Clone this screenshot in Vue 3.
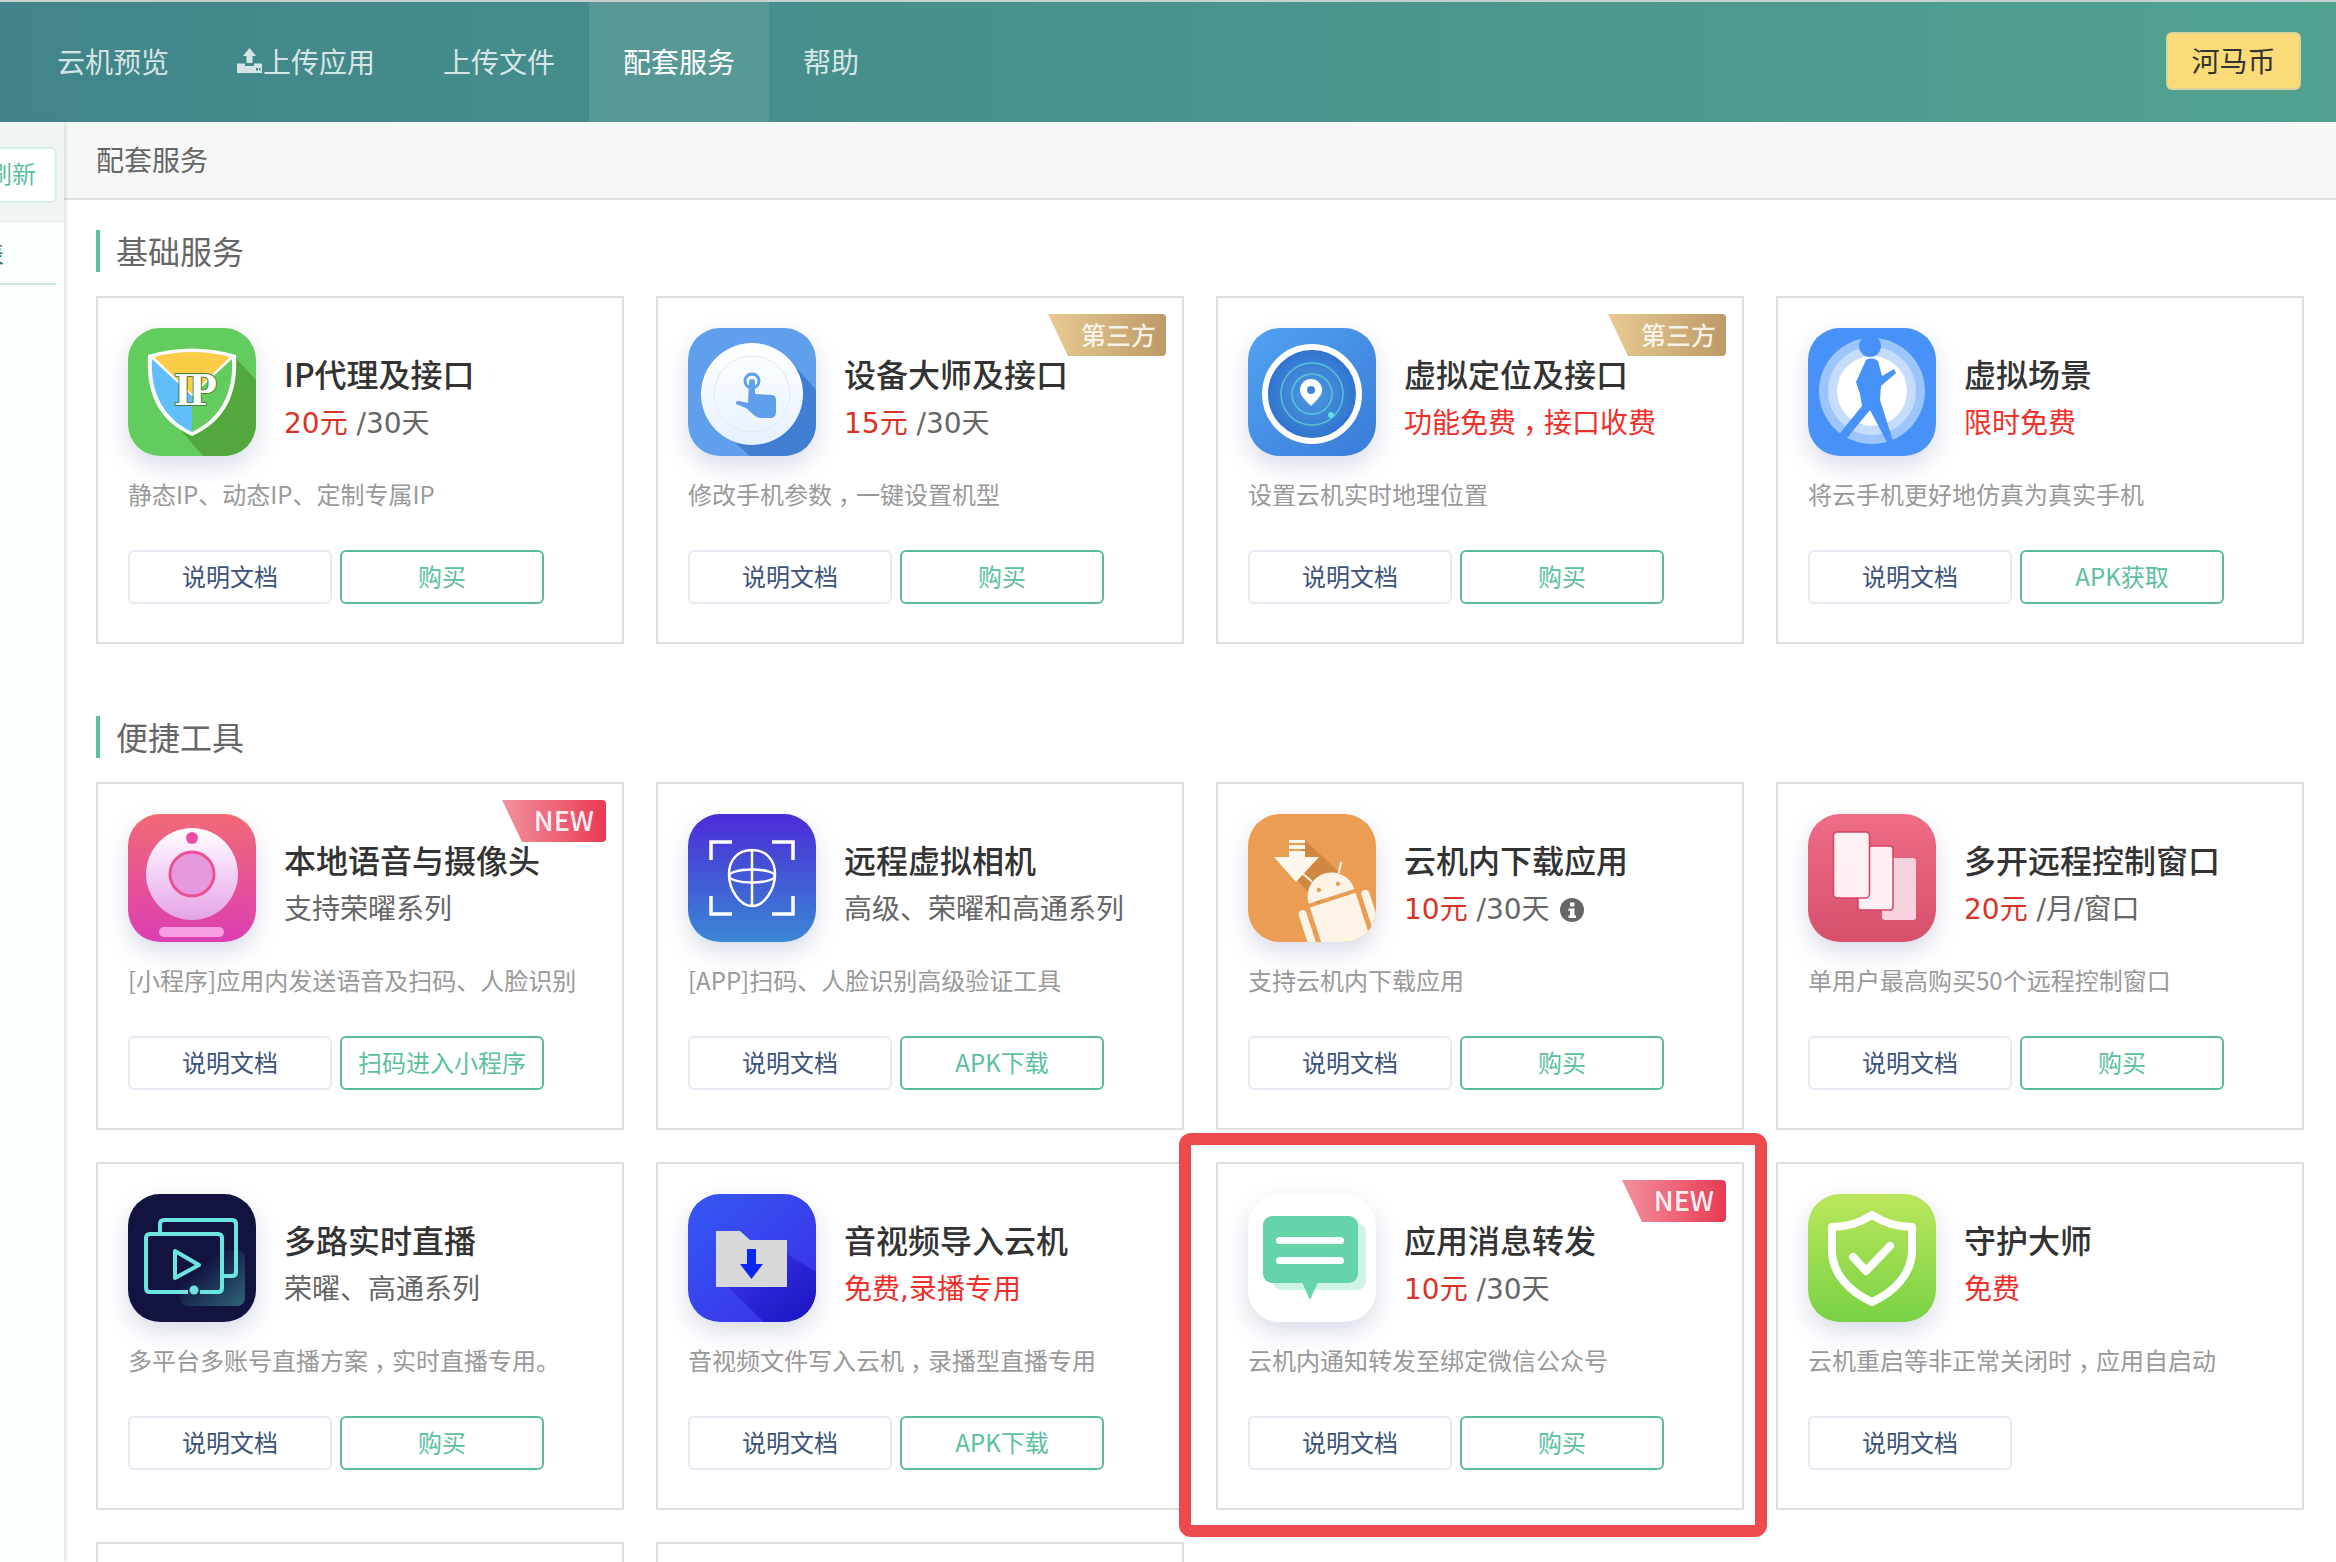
<script setup>
const nav = [
  { label: '云机预览' },
  { label: '上传应用', upload: true },
  { label: '上传文件' },
  { label: '配套服务', active: true },
  { label: '帮助' }
]
const basic = [
  { icon: 'ip', title: 'IP代理及接口', price: '20元', unit: ' /30天', desc: '静态IP、动态IP、定制专属IP', action: '购买' },
  { icon: 'device', title: '设备大师及接口', price: '15元', unit: ' /30天', desc: '修改手机参数，一键设置机型', action: '购买', badge: 'third' },
  { icon: 'loc', title: '虚拟定位及接口', free: '功能免费，接口收费', desc: '设置云机实时地理位置', action: '购买', badge: 'third' },
  { icon: 'scene', title: '虚拟场景', free: '限时免费', desc: '将云手机更好地仿真为真实手机', action: 'APK获取' }
]
const tools = [
  { icon: 'cam', title: '本地语音与摄像头', sub: '支持荣曜系列', desc: '[小程序]应用内发送语音及扫码、人脸识别', action: '扫码进入小程序', badge: 'new' },
  { icon: 'face', title: '远程虚拟相机', sub: '高级、荣曜和高通系列', desc: '[APP]扫码、人脸识别高级验证工具', action: 'APK下载' },
  { icon: 'dl', title: '云机内下载应用', price: '10元', unit: ' /30天', info: true, desc: '支持云机内下载应用', action: '购买' },
  { icon: 'multi', title: '多开远程控制窗口', price: '20元', unit: ' /月/窗口', desc: '单用户最高购买50个远程控制窗口', action: '购买' },
  { icon: 'live', title: '多路实时直播', sub: '荣曜、高通系列', desc: '多平台多账号直播方案，实时直播专用。', action: '购买' },
  { icon: 'folder', title: '音视频导入云机', free: '免费,录播专用', desc: '音视频文件写入云机，录播型直播专用', action: 'APK下载' },
  { icon: 'msg', title: '应用消息转发', price: '10元', unit: ' /30天', desc: '云机内通知转发至绑定微信公众号', action: '购买', badge: 'new', marked: true },
  { icon: 'shield', title: '守护大师', free: '免费', desc: '云机重启等非正常关闭时，应用自启动' },
  { empty: true },
  { empty: true }
]
const sections = [
  { name: '基础服务', cards: basic },
  { name: '便捷工具', cards: tools }
]
// Splits a text around the full-width comma so that it can sit in the middle of its cell.
const split = (s) => s.split(/(，)/).filter(Boolean)
</script>

<template>
  <div class="page">
    <div class="topline"></div>
    <header class="header">
      <nav class="nav">
        <a v-for="n in nav" :key="n.label" class="nav-item" :class="{ active: n.active }">
          <svg v-if="n.upload" class="up-icon" viewBox="0 0 25 25">
            <path d="M12.5 0 L19 8 H15.5 V15 H9.500 V8 H6 Z" fill="#d3e6e5" />
            <path d="M0 15.500 H8 V18 H17 V15.500 H25 V25 H0 Z" fill="#d3e6e5" />
            <rect x="19" y="20" width="2" height="2.500" fill="#41868a" />
            <rect x="22" y="20" width="1.500" height="2.500" fill="#41868a" />
          </svg>
          <span>{{ n.label }}</span>
        </a>
      </nav>
      <button class="coin">河马币</button>
    </header>
    <div class="body">
      <aside class="side">
        <div class="side-top">
          <div class="refresh">刷新</div>
        </div>
        <div class="side-row"><span>列表</span></div>
      </aside>
      <main class="main">
        <div class="crumb">配套服务</div>
        <div class="content">
          <section v-for="s in sections" :key="s.name" class="section">
            <h2 class="sec-title">{{ s.name }}</h2>
            <div class="grid">
              <template v-for="(c, i) in s.cards" :key="i">
                <div v-if="c.empty" class="card"></div>
                <article v-else class="card">
                  <div v-if="c.badge === 'third'" class="badge third">第三方</div>
                  <div v-if="c.badge === 'new'" class="badge new">NEW</div>
                  <div v-if="c.marked" class="mark"></div>
                  <div class="top">
                    <div class="icon">
                      <svg v-if="c.icon === 'ip'" viewBox="0 0 128 128">
                        <rect width="128" height="128" fill="#62cc5f" />
                        <path d="M104 26 L128 52 V128 H75 L44 92Z" fill="#52a83c" />
                        <path d="M20 27 Q64 14 108 27 C110 62 100 92 64 108 C28 92 18 62 20 27Z" fill="#fff" />
                        <path d="M24 31 L64 68 V104 C34 90 22 62 24 31Z" fill="#62bdfb" />
                        <path d="M104 31 L64 68 V104 C94 90 106 62 104 31Z" fill="#62cc5f" />
                        <path d="M26 29 Q64 19 102 29 L64 66Z" fill="#fbcd47" />
                        <text x="66" y="77" text-anchor="middle" class="ip-text">IP</text>
                      </svg>
                      <svg v-else-if="c.icon === 'device'" viewBox="0 0 128 128">
                        <defs><linearGradient id="g-dev" x1="0" y1="0" x2="0" y2="1"><stop offset="0" stop-color="#fff" /><stop offset="1" stop-color="#e6f1fe" /></linearGradient></defs>
                        <rect width="128" height="128" fill="#5f9fec" />
                        <path d="M100 30 L128 62 V128 H62 L36 104Z" fill="#3f7ed0" />
                        <circle cx="64" cy="66" r="51" fill="url(#g-dev)" />
                        <circle cx="64" cy="66" r="38" fill="none" stroke="#dce9f9" stroke-width="1" />
                        <circle cx="64" cy="53" r="7" fill="none" stroke="#5f9fec" stroke-width="3" />
                        <path d="M61 54 Q61 51 64 51 Q67 51 67 54 V66 L84 67 Q88 67.500 88 72 V84 Q88 90 82 90 H72 Q69 90 66 87 L58 80 L48 76 Q47 73 51 73 L60 75Z" fill="#5f9fec" />
                      </svg>
                      <svg v-else-if="c.icon === 'loc'" viewBox="0 0 128 128">
                        <defs>
                          <linearGradient id="g-loc" x1="0" y1="0" x2="1" y2="1"><stop offset="0" stop-color="#52a2f2" /><stop offset="1" stop-color="#397cd8" /></linearGradient>
                          <radialGradient id="g-loc2"><stop offset="0" stop-color="#4f9ae0" /><stop offset="1" stop-color="#2f72cf" /></radialGradient>
                        </defs>
                        <rect width="128" height="128" fill="url(#g-loc)" />
                        <circle cx="64" cy="66" r="47" fill="url(#g-loc2)" stroke="#fff" stroke-width="6" />
                        <circle cx="64" cy="66" r="31" fill="none" stroke="#58c3d2" stroke-width="1.500" />
                        <circle cx="64" cy="66" r="20" fill="none" stroke="#58c3d2" stroke-width="1.500" />
                        <path d="M63 78 C56 71 52 67 52 62 A11 11 0 0 1 74 62 C74 67 70 71 63 78Z" fill="#fff" />
                        <circle cx="63" cy="62" r="4" fill="#3f85d6" />
                        <circle cx="83" cy="87" r="3" fill="#62dce0" />
                      </svg>
                      <svg v-else-if="c.icon === 'scene'" viewBox="0 0 128 128">
                        <rect width="128" height="128" fill="#4891f8" />
                        <circle cx="64" cy="63" r="53" fill="#9cc6fb" />
                        <circle cx="64" cy="63" r="44" fill="#c5dcfd" />
                        <circle cx="64" cy="63" r="35" fill="#fff" />
                        <circle cx="62" cy="18" r="11" fill="#4891f8" />
                        <path d="M58 32 Q64 28 70 33 L74 48 L86 41 L88 45 L73 58 L72 72 L86 116 L81 118 L62 82 L34 116 L28 110 L54 78 L52 66 L48 54Z" fill="#4891f8" />
                      </svg>
                      <svg v-else-if="c.icon === 'cam'" viewBox="0 0 128 128">
                        <defs>
                          <linearGradient id="g-cam" x1="0" y1="0" x2="0" y2="1"><stop offset="0" stop-color="#f06a74" /><stop offset="1" stop-color="#db3eb3" /></linearGradient>
                          <linearGradient id="g-cam2" x1="0" y1="0" x2="0" y2="1"><stop offset="0" stop-color="#fff" /><stop offset="1" stop-color="#e6a3e8" /></linearGradient>
                        </defs>
                        <rect width="128" height="128" fill="url(#g-cam)" />
                        <circle cx="64" cy="60" r="46" fill="url(#g-cam2)" />
                        <circle cx="64" cy="24" r="6" fill="#ea4ea0" />
                        <circle cx="64" cy="60" r="22" fill="#e49adc" stroke="#ec4f95" stroke-width="3" />
                        <rect x="31" y="113" width="65" height="10" rx="5" fill="#f59fe0" />
                      </svg>
                      <svg v-else-if="c.icon === 'face'" viewBox="0 0 128 128">
                        <defs><linearGradient id="g-face" x1="0" y1="0" x2="0" y2="1"><stop offset="0" stop-color="#4b2bd8" /><stop offset="1" stop-color="#3a87d4" /></linearGradient></defs>
                        <rect width="128" height="128" fill="url(#g-face)" />
                        <g fill="none" stroke="#fff" stroke-width="3.500">
                          <path d="M23 46 V28 H44" /><path d="M84 28 H105 V46" /><path d="M23 82 V100 H44" /><path d="M84 100 H105 V82" />
                          <path d="M64 36 C78 36 87 46 87 60 C87 76 76 92 64 92 C52 92 41 76 41 60 C41 46 50 36 64 36Z" stroke-width="2.500" />
                          <ellipse cx="64" cy="62" rx="23" ry="6.500" stroke-width="2.500" />
                          <path d="M64 36 V92" stroke-width="2.500" />
                        </g>
                      </svg>
                      <svg v-else-if="c.icon === 'dl'" viewBox="0 0 128 128">
                        <rect width="128" height="128" fill="#eb9d54" />
                        <path d="M57 26 L95 62 L70 90 L46 62Z" fill="#d0873f" />
                        <path d="M41 26 H57 V29 H41Z M41 31 H57 V35 H41Z M41 37 H57 V43 H71 L48 68 L26 43 H41Z" fill="#fff6ec" />
                        <g transform="rotate(-18 86 90)" fill="#fdf3e6">
                          <path d="M62 82 A24 24 0 0 1 110 82Z" />
                          <rect x="62" y="86" width="48" height="70" />
                          <rect x="49" y="86" width="8" height="44" rx="4" />
                          <rect x="115" y="86" width="8" height="44" rx="4" />
                          <path d="M72 62 L66 52 M100 62 L106 52" stroke="#fdf3e6" stroke-width="2" />
                          <circle cx="76" cy="72" r="2.200" fill="#eb9d54" />
                          <circle cx="96" cy="72" r="2.200" fill="#eb9d54" />
                        </g>
                      </svg>
                      <svg v-else-if="c.icon === 'multi'" viewBox="0 0 128 128">
                        <defs><linearGradient id="g-mul" x1="0" y1="0" x2="0" y2="1"><stop offset="0" stop-color="#ef6d86" /><stop offset="1" stop-color="#d6506c" /></linearGradient></defs>
                        <rect width="128" height="128" fill="url(#g-mul)" />
                        <rect x="74" y="44" width="34" height="62" rx="3" fill="#f8d2dc" />
                        <rect x="50" y="32" width="35" height="64" rx="3" fill="#fdf1f4" stroke="#d84060" stroke-width="1.500" />
                        <rect x="25.500" y="18" width="36" height="66" rx="4" fill="#fdf1f4" stroke="#d84060" stroke-width="1.500" />
                      </svg>
                      <svg v-else-if="c.icon === 'live'" viewBox="0 0 128 128">
                        <defs><linearGradient id="g-live" x1="0.300" y1="0.300" x2="1" y2="1"><stop offset="0" stop-color="#131342" /><stop offset="1" stop-color="#2e6478" /></linearGradient></defs>
                        <rect width="128" height="128" fill="#131342" />
                        <rect x="52" y="56" width="65" height="56" rx="8" fill="url(#g-live)" />
                        <g fill="none" stroke="#6ce5e0" stroke-width="4" stroke-linejoin="round">
                          <path d="M32 38 V30 Q32 26 36 26 H104 Q108 26 108 30 V78 Q108 82 104 82 H95" />
                          <path d="M60 98 H22 Q18 98 18 94 V44 Q18 40 22 40 H90 Q94 40 94 44 V94 Q94 98 90 98 H72" />
                          <path d="M47 57 L71 71 L47 84Z" />
                        </g>
                        <circle cx="66" cy="96" r="4.500" fill="#6ce5e0" />
                      </svg>
                      <svg v-else-if="c.icon === 'folder'" viewBox="0 0 128 128">
                        <defs>
                          <linearGradient id="g-fol" x1="0" y1="0" x2="1" y2="1"><stop offset="0" stop-color="#3458f2" /><stop offset="1" stop-color="#3a2ee8" /></linearGradient>
                          <linearGradient id="g-fol2" x1="0" y1="0" x2="1" y2="1"><stop offset="0" stop-color="#3a36e8" /><stop offset="1" stop-color="#1a14c0" /></linearGradient>
                        </defs>
                        <rect width="128" height="128" fill="url(#g-fol)" />
                        <path d="M40 93 L76 128 H128 V78 L99 60Z" fill="url(#g-fol2)" />
                        <path d="M28 37 H52 L62 46 H99 V93 H28Z" fill="#d8d8d8" />
                        <path d="M59 55 H68 V70 H75 L63.500 85 L52 70 H59Z" fill="#0a28f0" />
                      </svg>
                      <svg v-else-if="c.icon === 'msg'" viewBox="0 0 128 128">
                        <rect width="128" height="128" fill="#fff" />
                        <rect x="25" y="29" width="93" height="67" rx="9" fill="#cff3e4" />
                        <path d="M53 86 H71 L62 106Z" fill="#65d4a8" />
                        <rect x="15" y="22" width="95" height="67" rx="9" fill="#65d4a8" />
                        <rect x="28" y="43" width="68" height="7" rx="3.500" fill="#fff" />
                        <rect x="28" y="63" width="68" height="7" rx="3.500" fill="#fff" />
                      </svg>
                      <svg v-else-if="c.icon === 'shield'" viewBox="0 0 128 128">
                        <defs><linearGradient id="g-shi" x1="0" y1="0" x2="0" y2="1"><stop offset="0" stop-color="#bbe65c" /><stop offset="1" stop-color="#78d144" /></linearGradient></defs>
                        <rect width="128" height="128" fill="url(#g-shi)" />
                        <path d="M64 21 C50 30 36 33 24 33 V56 C24 80 42 98 64 108 C86 98 104 80 104 56 V33 C92 33 78 30 64 21Z" fill="none" stroke="#fff" stroke-width="8" stroke-linejoin="round" />
                        <path d="M45 63 L58 77 L82 52" fill="none" stroke="#fff" stroke-width="8" stroke-linecap="round" stroke-linejoin="round" />
                      </svg>
                    </div>
                    <div class="info">
                      <div class="title">{{ c.title }}</div>
                      <div class="line">
                        <template v-if="c.price"><span class="price">{{ c.price }}</span><span class="unit">{{ c.unit }}</span></template>
                        <span v-if="c.free" class="free"><template v-for="(p, k) in split(c.free)" :key="k"><span v-if="p === '，'" class="comma">{{ p }}</span><template v-else>{{ p }}</template></template></span>
                        <span v-if="c.sub" class="unit">{{ c.sub }}</span>
                        <svg v-if="c.info" class="info-i" viewBox="0 0 24 24">
                          <circle cx="12" cy="12" r="12" fill="#666" />
                          <rect x="10" y="4.500" width="4.500" height="4" fill="#fff" />
                          <path d="M8.500 10.500 H14.500 V17.500 H16 V20 H8.500 V17.500 H10 V13 H8.500Z" fill="#fff" />
                        </svg>
                      </div>
                    </div>
                  </div>
                  <p class="desc"><template v-for="(p, k) in split(c.desc)" :key="k"><span v-if="p === '，'" class="comma">{{ p }}</span><template v-else>{{ p }}</template></template></p>
                  <div class="btns">
                    <a class="btn doc">说明文档</a>
                    <a v-if="c.action" class="btn buy">{{ c.action }}</a>
                  </div>
                </article>
              </template>
            </div>
          </section>
        </div>
      </main>
    </div>
  </div>
</template>

<style>
html, body { margin: 0; background: #fff; }
</style>

<style scoped>
.page {
  height: 1562px;
  overflow: hidden;
  display: flex;
  flex-direction: column;
  font-family: "Noto Sans CJK SC", "Liberation Sans", sans-serif;
  color: #333;
}
.topline { height: 2px; background: #c9cfce; flex: none; }
.header {
  height: 120px;
  flex: none;
  display: flex;
  align-items: center;
  justify-content: space-between;
  background: linear-gradient(90deg, #41858a, #50a28f);
  padding: 0 35px 0 23px;
}
.nav { display: flex; height: 100%; }
.nav-item {
  display: flex;
  align-items: center;
  box-sizing: border-box;
  padding: 0 34px 3px;
  font-size: 28px;
  color: rgba(255, 255, 255, 0.8);
}
.nav-item.active { background: rgba(255, 255, 255, 0.1); color: #fff; }
.up-icon { width: 25px; height: 25px; display: block; margin-right: 1px; }
.coin {
  width: 135px;
  height: 58px;
  box-sizing: border-box;
  border: 2px solid rgba(200, 200, 180, 0.6);
  border-radius: 6px;
  background: #fbdb78;
  color: #333;
  font: inherit;
  font-size: 28px;
  padding: 0 0 3px;
  margin-top: -2px;
}
.body { flex: 1; display: flex; min-height: 0; }
.side {
  width: 64px;
  flex: none;
  background: #fafffe;
  box-shadow: 2px 0 4px rgba(60, 100, 100, 0.18);
  position: relative;
  overflow: hidden;
}
.side-top {
  height: 100px;
  box-sizing: border-box;
  background: #f0f4f4;
  padding: 25px 7px 0 0;
  display: flex;
  justify-content: flex-end;
  border-bottom: 1px solid #dfe9e8;
}
.refresh {
  width: 80px;
  height: 56px;
  flex: none;
  box-sizing: border-box;
  background: #fff;
  border: 2px solid #d6efe8;
  border-radius: 6px;
  padding-right: 19px;
  font-size: 24px;
  line-height: 48px;
  text-align: right;
  color: #5bbfa0;
}
.side-row {
  height: 63px;
  box-sizing: border-box;
  margin-right: 8px;
  border-bottom: 2px solid #c8e6dc;
  display: flex;
  justify-content: flex-end;
  padding-right: 52px;
  align-items: center;
  font-size: 24px;
  color: #3f6b70;
  white-space: nowrap;
}
.side-row span { flex: none; }
.main { flex: 1; min-width: 0; }
.crumb {
  height: 78px;
  box-sizing: border-box;
  background: #f6f8f8;
  border-bottom: 2px solid #dfdfdf;
  padding-left: 32px;
  font-size: 28px;
  line-height: 74px;
  color: #666;
}
.content { padding: 30px 32px 0; }
.section + .section { margin-top: 72px; }
.sec-title {
  margin: 0 0 24px;
  height: 42px;
  border-left: 4px solid #5bbfa0;
  padding-left: 16px;
  font-size: 32px;
  line-height: 40px;
  font-weight: 400;
  color: #666;
}
.grid { display: grid; grid-template-columns: repeat(4, 1fr); gap: 32px; }
.card {
  position: relative;
  height: 348px;
  box-sizing: border-box;
  border: 2px solid #dfdfdf;
  padding: 30px 30px 0;
  background: #fff;
}
.badge {
  position: absolute;
  top: 16px;
  right: 16px;
  height: 42px;
  border-radius: 0 4px 4px 0;
  box-sizing: border-box;
  line-height: 40px;
  text-align: right;
  clip-path: polygon(0 0, 100% 0, 100% 100%, 20px 100%);
}
.badge.third {
  width: 118px;
  padding-right: 10px;
  font-size: 25px;
  font-weight: 500;
  color: rgba(255, 255, 255, 0.85);
  background: linear-gradient(90deg, #e9ca93, #bc9a67);
}
.badge.new {
  width: 104px;
  padding-right: 12px;
  font-size: 27px;
  font-weight: 500;
  color: rgba(255, 255, 255, 0.92);
  background: linear-gradient(90deg, #f2929f, #e93a52);
}
.mark {
  position: absolute;
  left: -39px;
  right: -25px;
  top: -31px;
  bottom: -29px;
  border: 12px solid #ec4a4c;
  border-radius: 12px;
  pointer-events: none;
  z-index: 2;
}
.top { display: flex; height: 128px; }
.icon {
  width: 128px;
  height: 128px;
  flex: none;
  border-radius: 32px;
  overflow: hidden;
  box-shadow: 0 10px 24px rgba(60, 80, 140, 0.2);
}
.icon svg { display: block; width: 128px; height: 128px; }
.ip-text {
  font-family: "Liberation Serif", serif;
  font-size: 46px;
  letter-spacing: -3px;
  font-weight: 700;
  fill: #fff;
  stroke: #3f7f3c;
  stroke-width: 2;
  paint-order: stroke;
}
.info { margin-left: 28px; padding-top: 21px; min-width: 0; }
.title { font-size: 32px; line-height: 48px; font-weight: 500; color: #333; white-space: nowrap; }
.line {
  display: flex;
  align-items: center;
  margin-top: 3px;
  font-family: "DejaVu Sans", "Noto Sans CJK SC", sans-serif;
  font-size: 28px;
  line-height: 48px;
  white-space: pre;
}
.price { color: #d93328; }
.unit { color: #666; }
.free { color: #f0302a; }
.comma { font-feature-settings: "halt"; padding: 0 0.25em; }
.info-i { width: 24px; height: 24px; margin-left: 10px; }
.desc {
  margin: 18px 0 0;
  font-size: 24px;
  line-height: 40px;
  color: #999;
  white-space: nowrap;
}
.btns { display: flex; gap: 8px; margin-top: 36px; }
.btn {
  width: 204px;
  height: 54px;
  box-sizing: border-box;
  border-radius: 6px;
  font-size: 24px;
  line-height: 48px;
  text-align: center;
}
.doc { border: 2px solid #e6eaf2; color: #3c5378; }
.buy { border: 2px solid #5abb9f; color: #5bbfa0; }
</style>
